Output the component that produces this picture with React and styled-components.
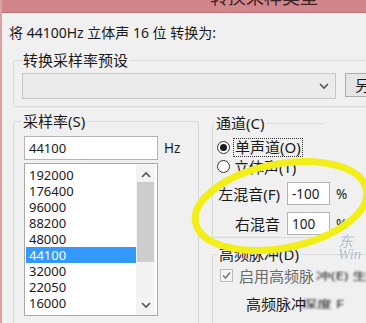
import React from 'react'
import styled, { createGlobalStyle } from 'styled-components'

const GlobalStyle = createGlobalStyle`
    html, body {
        margin: 0;
        padding: 0;
        background: #f0f0f0;
        overflow: hidden;
    }
    body {
        font-family: "Noto Sans", "Noto Sans CJK SC", sans-serif;
        color: #1a1a1a;
    }
`

const rates = ['192000', '176400', '96000', '88200', '48000', '44100', '32000', '22050', '16000']

const Chevron = ({ up }) => (
    <svg width="10" height="7" viewBox="0 0 10 7">
        <path d={up ? 'M1 6 L5 2 L9 6' : 'M1 1 L5 5 L9 1'} fill="none" stroke="#555" strokeWidth="1.6" />
    </svg>
)

const App = () => {
    return (
        <Window>
            <GlobalStyle />
            <TitleBar>
                <TitleText>转换采样类型</TitleText>
            </TitleBar>
            <Body>
                <Header>将 44100Hz 立体声 16 位 转换为:</Header>
                <PresetGroup>
                    <Legend>转换采样率预设</Legend>
                    <PresetRow>
                        <Combo>
                            <Chevron />
                        </Combo>
                        <Button>另存为(A)...</Button>
                    </PresetRow>
                </PresetGroup>
                <MainRow>
                    <RateGroup>
                        <Legend>采样率(S)</Legend>
                        <InputRow>
                            <TextBox $width={134}>44100</TextBox>
                            <Unit>Hz</Unit>
                        </InputRow>
                        <ListBox>
                            <Items>
                                {rates.map((r) => (
                                    <Item key={r} $selected={r === '44100'}>{r}</Item>
                                ))}
                            </Items>
                            <ScrollBar>
                                <Chevron up />
                                <Thumb />
                                <Chevron />
                            </ScrollBar>
                        </ListBox>
                    </RateGroup>
                    <RightColumn>
                        <ChannelGroup>
                            <Legend>通道(C)</Legend>
                            <RadioRow>
                                <Radio $checked />
                                <Focus>单声道(O)</Focus>
                            </RadioRow>
                            <RadioRow>
                                <Radio />
                                <span>立体声(T)</span>
                            </RadioRow>
                            <MixRow $first>
                                <MixLabel>左混音(F)</MixLabel>
                                <TextBox $width={43}>-100</TextBox>
                                <Percent>%</Percent>
                            </MixRow>
                            <MixRow>
                                <MixLabel>右混音</MixLabel>
                                <TextBox $width={43}>100</TextBox>
                                <Percent>%</Percent>
                            </MixRow>
                        </ChannelGroup>
                        <DitherGroup>
                            <Legend>高频脉冲(D)</Legend>
                            <CheckRow>
                                <CheckBox>
                                    <svg width="11" height="11" viewBox="0 0 11 11">
                                        <path d="M2 5.5 L4.5 8 L9 2.5" fill="none" stroke="#7a7a7a" strokeWidth="1.6" />
                                    </svg>
                                </CheckBox>
                                <span>启用高频脉</span>
                                <Blurred>冲(E) 生</Blurred>
                            </CheckRow>
                            <SubRow>
                                <span>高频脉冲</span>
                                <Blurred>深度 F</Blurred>
                            </SubRow>
                        </DitherGroup>
                    </RightColumn>
                </MainRow>
            </Body>
            <Watermark>东<br />Win</Watermark>
            <Annotation width="366" height="323" viewBox="0 0 366 323">
                <ellipse cx="281" cy="206" rx="87" ry="42" fill="none" stroke="#f2ee1a" strokeWidth="7" transform="rotate(-11 281 206)" />
            </Annotation>
        </Window>
    )
}

const Window = styled.div`
    position: relative;
    width: 366px;
    height: 323px;
    overflow: hidden;
    background: #f0f0f0;
    border-left: 2px solid #d9a3a6;
    box-sizing: border-box;
    font-size: 15px;
`

const TitleBar = styled.div`
    height: 12px;
    background: #d2868b;
    border-bottom: 1px solid #b9767a;
    overflow: hidden;
    padding-left: 208px;
`

const TitleText = styled.div`
    margin-top: -14px;
    font-size: 18px;
    line-height: 22px;
    color: #3d2224;
    white-space: nowrap;
`

const Body = styled.div`
    padding-left: 7px;
`

const Header = styled.div`
    margin-top: 11px;
    height: 18px;
    line-height: 18px;
    font-size: 14px;
    white-space: nowrap;
`

const Group = styled.fieldset`
    margin: 0;
    border: 1px solid #d9d9d9;
    border-radius: 2px;
    box-sizing: border-box;
    min-width: 0;
    flex-shrink: 0;
`

const Legend = styled.legend`
    padding: 0 2px;
    margin-left: -3px;
    height: 18px;
    line-height: 18px;
    font-size: 15px;
    white-space: nowrap;
`

const PresetGroup = styled(Group)`
    margin: 9px 0 0 4px;
    width: 380px;
    padding: 4px 0 7px 10px;
`

const PresetRow = styled.div`
    display: flex;
    gap: 9px;
    margin-left: -2px;
`

const Combo = styled.div`
    flex-shrink: 0;
    width: 314px;
    height: 26px;
    box-sizing: border-box;
    border: 1px solid #c5c5c5;
    background: #ebebeb;
    display: flex;
    align-items: center;
    justify-content: flex-end;
    padding-right: 6px;
`

const Button = styled.div`
    flex-shrink: 0;
    width: 70px;
    height: 24px;
    box-sizing: border-box;
    border: 1px solid #adadad;
    background: #e5e5e5;
    padding-left: 9px;
    line-height: 22px;
    white-space: nowrap;
`

const MainRow = styled.div`
    display: flex;
    gap: 13px;
    margin: 5px 0 0 4px;
`

const RateGroup = styled(Group)`
    width: 186px;
    height: 230px;
    padding: 6px 0 0 10px;
`

const InputRow = styled.div`
    display: flex;
    align-items: center;
    gap: 6px;
`

const TextBox = styled.div`
    flex-shrink: 0;
    width: ${(p) => p.$width}px;
    height: 24px;
    box-sizing: border-box;
    border: 1px solid #b4b4b4;
    background: #fff;
    font-size: 13px;
    line-height: 22px;
    padding-left: 4px;
`

const Unit = styled.span`
    font-size: 13.5px;
`

const ListBox = styled.div`
    display: flex;
    margin-top: 3px;
    width: 134px;
    height: 153px;
    box-sizing: border-box;
    border: 1px solid #a9a9a9;
    background: #fff;
    padding: 3px 2px 0 1px;
`

const Items = styled.div`
    flex: 1;
`

const Item = styled.div`
    height: 16px;
    line-height: 16px;
    font-size: 13px;
    padding-left: 3px;
    background: ${(p) => (p.$selected ? '#3399ff' : 'transparent')};
    color: ${(p) => (p.$selected ? '#fff' : '#1a1a1a')};
`

const ScrollBar = styled.div`
    width: 19px;
    margin-top: -3px;
    height: 151px;
    background: #f3f3f3;
    display: flex;
    flex-direction: column;
    align-items: center;
    padding-top: 7px;
    box-sizing: border-box;

    svg:last-child {
        margin-top: auto;
        margin-bottom: 6px;
    }
`

const Thumb = styled.div`
    width: 17px;
    height: 80px;
    margin-top: 4px;
    background: #cdcdcd;
`

const RightColumn = styled.div`
    flex-shrink: 0;
    display: flex;
    flex-direction: column;
    margin-top: 2px;
`

const ChannelGroup = styled(Group)`
    width: 112px;
    height: 124px;
    border-right: none;
    padding: 6px 0 0 4px;
`

const RadioRow = styled.div`
    display: flex;
    align-items: center;
    gap: 4px;
    height: 19px;
    white-space: nowrap;
`

const Radio = styled.span`
    width: 13px;
    height: 13px;
    box-sizing: border-box;
    border-radius: 50%;
    border: 1px solid #333;
    background: #fff;
    display: flex;
    align-items: center;
    justify-content: center;

    &::after {
        content: '';
        width: 7px;
        height: 7px;
        border-radius: 50%;
        background: ${(p) => (p.$checked ? '#1a1a1a' : 'transparent')};
    }
`

const Focus = styled.span`
    outline: 1px dotted #333;
    padding: 0 1px;
    line-height: 17px;
`

const MixRow = styled.div`
    display: flex;
    align-items: center;
    gap: 7px;
    margin-top: ${(p) => (p.$first ? 6 : 7)}px;
    white-space: nowrap;

    ${TextBox} {
        height: 23px;
        font-size: 13.5px;
    }
`

const MixLabel = styled.span`
    flex-shrink: 0;
    width: 63px;
    text-align: right;
`

const Percent = styled.span`
    font-size: 13.5px;
    margin-left: -1px;
`

const DitherGroup = styled(Group)`
    margin-top: 7px;
    width: 200px;
    height: 90px;
    border-right: none;
    padding: 3px 0 0 7px;
`

const CheckRow = styled.div`
    display: flex;
    align-items: center;
    gap: 6px;
    height: 18px;
    color: #6a6a6a;
    white-space: nowrap;
`

const CheckBox = styled.span`
    width: 13px;
    height: 13px;
    box-sizing: border-box;
    border: 1px solid #bcbcbc;
    background: #f4f4f4;
    display: flex;
    align-items: center;
    justify-content: center;
`

const SubRow = styled.div`
    margin: 11px 0 0 26px;
    height: 18px;
    line-height: 18px;
    white-space: nowrap;
`

const Blurred = styled.span`
    display: inline-block;
    margin-left: -4px;
    color: #222;
    filter: blur(1.2px);
    transform: scaleY(0.7);
`

const Watermark = styled.div`
    position: absolute;
    left: 336px;
    top: 236px;
    font-family: "Liberation Serif", "Noto Sans CJK SC", serif;
    font-style: italic;
    font-size: 15px;
    line-height: 12px;
    color: #9fb3cc;
    opacity: 0.8;
`

const Annotation = styled.svg`
    position: absolute;
    left: -2px;
    top: 0;
    pointer-events: none;
`

export default App
